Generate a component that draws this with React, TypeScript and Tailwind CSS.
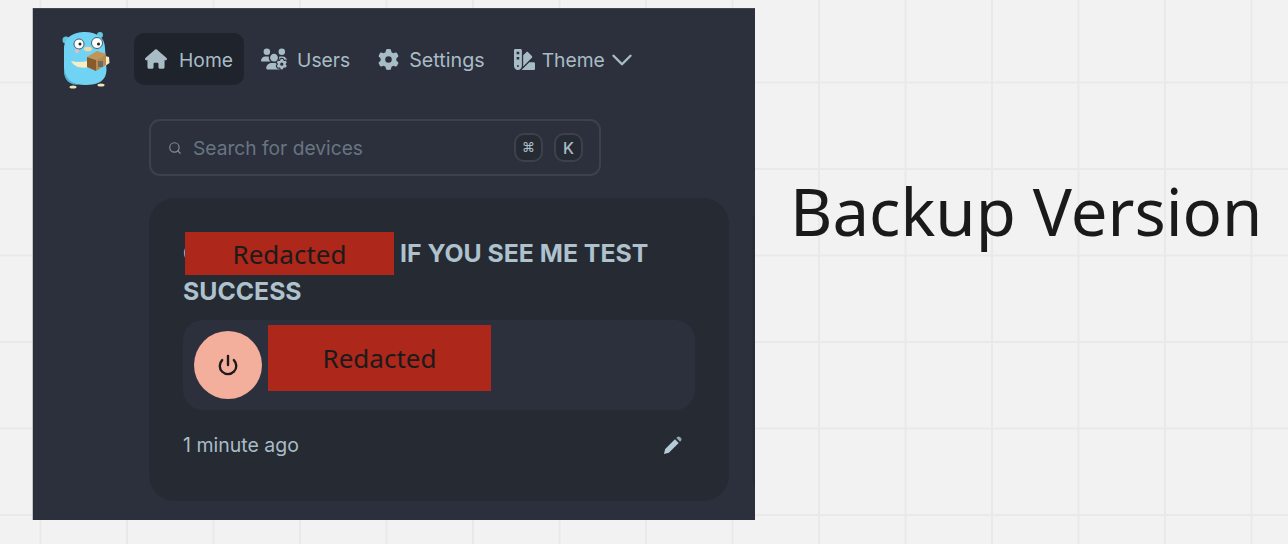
import { Search, Power, ChevronDown } from "lucide-react";
import { FaHouse, FaUsersGear, FaGear, FaSwatchbook } from "react-icons/fa6";

function Gopher() {
  return (
    <svg width="50" height="60" viewBox="0 0 50 60" className="shrink-0">
      <circle cx="4" cy="11" r="3.500" fill="#62c6e0" />
      <circle cx="38" cy="6" r="3" fill="#62c6e0" />
      <path d="M2 20C2 8 12 3 23 3s20 5 20 16l1.500 22c0 11-9 15-21 15S2.500 52 2 41z" fill="#70d3f3" />
      <path d="M2 38c1 10 6 16 15 18-9 0-14-4-15-12z" fill="#4fb4d4" />
      <ellipse cx="11" cy="58" rx="3.500" ry="1.600" fill="#efe2b8" />
      <ellipse cx="39" cy="56" rx="3.500" ry="1.500" fill="#efe2b8" />
      <circle cx="17" cy="15" r="5" fill="#fff" stroke="#2a3a40" strokeWidth="0.800" />
      <circle cx="18" cy="15" r="1.500" fill="#222" />
      <circle cx="35" cy="14" r="5.500" fill="#fff" stroke="#2a3a40" strokeWidth="0.800" />
      <circle cx="36.500" cy="15" r="1.500" fill="#222" />
      <ellipse cx="26" cy="20" rx="4" ry="2.300" fill="#f1d9a6" />
      <circle cx="15" cy="22" r="2" fill="#f2b8c0" />
      <path d="M9 32c6 1.500 11 1 17 0l1 6c-7 1.500-14 1-18-6z" fill="#f6ecc6" />
      <path d="M43 27l4 1 .5 6-4.500 3z" fill="#f6ecc6" />
      <path d="M25 28l10-6 9 3-10 6z" fill="#c19556" />
      <path d="M25 28l9 3 0 11-9-4z" fill="#8a5a2c" />
      <path d="M34 31l10-6 0 11-10 6z" fill="#b98a4e" />
      <rect x="36" y="32" width="5" height="6" fill="#6d6a66" />
    </svg>
  );
}

function NavItem({ icon, label, active, gap, size = "text-[19.300px]", children }: { icon: React.ReactNode; label: string; active?: boolean; gap: string; size?: string; children?: React.ReactNode }) {
  return (
    <div className={`flex items-center h-[52px] rounded-[10px] px-[11px] ${gap} ${active ? "bg-[#1f232c]" : ""}`}>
      {icon}
      <span className={`${size} leading-none pt-[4px]`}>{label}</span>
      {children}
    </div>
  );
}

function Key({ children, size }: { children: React.ReactNode; size: string }) {
  return (
    <div className={`w-[29px] h-[29px] rounded-[10px] bg-[#262a33] border-2 border-[#3c414c] flex items-center justify-center text-[#a8bcc6] font-medium ${size}`}>
      {children}
    </div>
  );
}

export default function App() {
  return (
    <div
      className="w-[1288px] h-[544px] overflow-hidden flex items-start bg-[#f2f2f2] bg-[linear-gradient(to_right,#e9e9e9_2px,transparent_2px),linear-gradient(to_bottom,#e9e9e9_2px,transparent_2px)] bg-[size:86.500px_86.500px] bg-[position:39.500px_-5px] pt-[8px] pl-[33px]"
      style={{ fontFamily: "Inter, 'Liberation Sans', sans-serif" }}
    >
      <div className="w-[722px] h-[512px] shrink-0 overflow-hidden bg-[#2c303c] text-[#a8bcc6] flex flex-col pl-[29px] border-t border-[#45454a] shadow-[-1px_0_0_#c4c4c4]">
        <div className="flex items-center mt-[24px] h-[52px]">
          <Gopher />
          <div className="flex items-center gap-[6px] ml-[22px]">
            <NavItem active gap="gap-[12px]" label="Home" icon={<FaHouse size={22} />} />
            <NavItem gap="gap-[10px]" label="Users" icon={<FaUsersGear size={26} />} />
            <NavItem gap="gap-[10px]" size="text-[19.700px]" label="Settings" icon={<FaGear size={21} />} />
            <div className="ml-[1px]">
              <NavItem gap="gap-[7px]" label="Theme" icon={<FaSwatchbook size={21} />}>
                <ChevronDown size={34} strokeWidth={1.700} className="-ml-[7px] mt-[1px]" />
              </NavItem>
            </div>
          </div>
        </div>

        <div className="ml-[87px] mt-[34px] w-[452px] h-[57px] rounded-[11px] border-2 border-[#3c414c] flex items-center pl-[17px] pr-[16px]">
          <Search size={14} className="text-[#7f8d99]" />
          <span className="ml-[11px] text-[19.200px] leading-none pt-[2px] text-[#687582] flex-1">Search for devices</span>
          <div className="flex gap-[11px]">
            <Key size="text-[13px]">⌘</Key>
            <Key size="text-[16px]">K</Key>
          </div>
        </div>

        <div className="ml-[87px] mt-[22px] flex gap-[23px]">
          <div className="w-[580px] h-[303px] shrink-0 rounded-[26px] bg-[#262a33] px-[34px] pt-[34px]">
            <div className="pt-[2px] text-[24.800px] leading-[38px] font-bold text-[#aec2ce]">
              <span className="relative inline-block w-[217px] h-[38px] align-top">
                C
                <span className="absolute left-[2px] -top-[2px] w-[209px] h-[43px] bg-[#ad271b] text-[#1c1a1a] font-normal text-[26px] leading-[44px] text-center" style={{ fontFamily: "'Noto Sans', sans-serif" }}>
                  Redacted
                </span>
              </span>
              IF YOU SEE ME TEST
              <br />
              SUCCESS
            </div>
            <div className="mt-[10px] w-[512px] h-[90px] rounded-[20px] bg-[#2c303c] flex items-center pl-[11px]">
              <div className="w-[68px] h-[68px] rounded-full bg-[#f4af9c] flex items-center justify-center">
                <Power size={22} strokeWidth={2.600} className="text-[#1c1a1a]" />
              </div>
              <div className="ml-[6px] self-start mt-[5px] w-[223px] h-[66px] bg-[#ad271b] text-[#1c1a1a] text-[26px] flex items-center justify-center" style={{ fontFamily: "'Noto Sans', sans-serif" }}>
                Redacted
              </div>
            </div>
            <div className="mt-[21px] w-[512px] flex items-center justify-between pr-[13px]">
              <span className="text-[19.500px] leading-[28px]">1 minute ago</span>
              <svg width="19" height="19" viewBox="0 0 20 20" className="text-[#b5ccd8]">
                <path d="M1 19l1.300-5.200L12.600 3.500l3.900 3.900L6.200 17.700z" fill="currentColor" />
                <path d="M14 2.100l1-1c.8-.8 2-.8 2.800 0l1.100 1.100c.8.800.8 2 0 2.800l-1 1z" fill="#8fa6b2" />
              </svg>
            </div>
          </div>
          <div className="w-[580px] h-[303px] shrink-0 rounded-[26px] bg-[#292d38]" />
        </div>
      </div>
      <div className="ml-[35px] mt-[170px] text-[65.300px] leading-none text-[#1a1a1a] whitespace-nowrap" style={{ fontFamily: "'Noto Sans', sans-serif" }}>
        Backup Version
      </div>
    </div>
  );
}
